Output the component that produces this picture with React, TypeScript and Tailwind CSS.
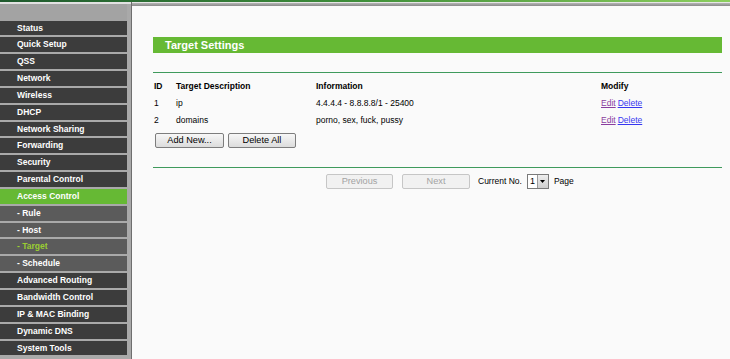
import React from "react"

type Item = { label: string; kind: "main" | "active" | "sub" | "subActive" }

const menu: Item[] = [
  { label: "Status", kind: "main" },
  { label: "Quick Setup", kind: "main" },
  { label: "QSS", kind: "main" },
  { label: "Network", kind: "main" },
  { label: "Wireless", kind: "main" },
  { label: "DHCP", kind: "main" },
  { label: "Network Sharing", kind: "main" },
  { label: "Forwarding", kind: "main" },
  { label: "Security", kind: "main" },
  { label: "Parental Control", kind: "main" },
  { label: "Access Control", kind: "active" },
  { label: "- Rule", kind: "sub" },
  { label: "- Host", kind: "sub" },
  { label: "- Target", kind: "subActive" },
  { label: "- Schedule", kind: "sub" },
  { label: "Advanced Routing", kind: "main" },
  { label: "Bandwidth Control", kind: "main" },
  { label: "IP & MAC Binding", kind: "main" },
  { label: "Dynamic DNS", kind: "main" },
  { label: "System Tools", kind: "main" },
]

const rows = [
  { id: "1", desc: "ip", info: "4.4.4.4 - 8.8.8.8/1 - 25400" },
  { id: "2", desc: "domains", info: "porno, sex, fuck, pussy" },
]

function MenuItem({ item }: { item: Item }) {
  const bg =
    item.kind === "active"
      ? "bg-[#66b934]"
      : item.kind === "main"
        ? "bg-[#3c3c3c]"
        : "bg-[#5b5b5b]"
  const color = item.kind === "subActive" ? "text-[#9acd32]" : "text-white"
  return (
    <div
      className={`${bg} ${color} h-[14.85px] mb-[2px] w-[127px] pl-[17px] text-[8.5px] font-bold leading-[15px] whitespace-nowrap`}
    >
      {item.label}
    </div>
  )
}

function Sidebar() {
  return (
    <div className="flex w-[132px] shrink-0 flex-col bg-[#a9a9a9] border-r border-[#6e6e6e]">
      <div className="h-[2px] bg-[#e2e2e2]" />
      <div className="h-[16.5px] bg-[#a3a3a3] w-[127px]" />
      {menu.map((m) => (
        <MenuItem key={m.label} item={m} />
      ))}
      <div className="flex-1 w-[127px] bg-[#a9a9a9]" />
    </div>
  )
}

function GreyButton({ children, w }: { children: React.ReactNode; w: string }) {
  return (
    <button
      className={`${w} h-[15px] rounded-[2px] border border-[#7d7d7d] bg-gradient-to-b from-[#f7f7f7] to-[#dcdcdc] text-[9.2px] leading-[13px] text-black`}
    >
      {children}
    </button>
  )
}

function DisabledButton({ children, w }: { children: React.ReactNode; w: string }) {
  return (
    <button
      className={`${w} h-[15px] rounded-[2px] border border-[#c6c6c6] bg-[#f1f1f1] text-[9.2px] leading-[13px] text-[#a3a3a3]`}
    >
      {children}
    </button>
  )
}

export default function App() {
  return (
    <div
      className="flex h-[359px] w-[730px] flex-col overflow-hidden bg-[#fafafa]"
      style={{ fontFamily: '"Liberation Sans", Arial, sans-serif' }}
    >
      <div className="h-[2px] bg-gradient-to-r from-[#1f5a2e] via-[#3f8f3a] to-[#8ccf5e]" />
      <div className="flex flex-1">
        <Sidebar />
        <div className="flex flex-1 flex-col">
          <div className="h-[1px] bg-[#e6e6e6]" />
          <div className="h-[3px] bg-gradient-to-b from-[#b5b5b5] to-[#8a8a8a]" />
          <div className="pl-[21px] pr-[8px] pt-[31px] text-[8.5px] text-black">
            <div className="h-[16px] bg-[#66b934] pl-[12px] text-[11px] font-bold leading-[16px] text-white">
              Target Settings
            </div>
            <div className="mt-[19px] h-[1px] bg-[#3f9a5c]" />
            <div className="mt-[5px]">
              <div className="flex h-[17px] items-center font-bold">
                <div className="w-[23px] pl-[1px]">ID</div>
                <div className="w-[140px]">Target Description</div>
                <div className="w-[285px]">Information</div>
                <div>Modify</div>
              </div>
              {rows.map((r) => (
                <div key={r.id} className="flex h-[17px] items-center">
                  <div className="w-[23px] pl-[1px]">{r.id}</div>
                  <div className="w-[140px]">{r.desc}</div>
                  <div className="w-[285px]">{r.info}</div>
                  <div className="flex gap-[2px]">
                    <span className="text-[#8a3d9e] underline">Edit</span>
                    <span className="text-[#3737f0] underline">Delete</span>
                  </div>
                </div>
              ))}
            </div>
            <div className="mt-[4px] flex gap-[4px] pl-[2px]">
              <GreyButton w="w-[69px]">Add New...</GreyButton>
              <GreyButton w="w-[68px]">Delete All</GreyButton>
            </div>
            <div className="mt-[19px] h-[1px] bg-[#3f9a5c]" />
            <div className="mt-[6px] flex items-center pl-[173px]">
              <DisabledButton w="w-[67px]">Previous</DisabledButton>
              <div className="ml-[9px]">
                <DisabledButton w="w-[68px]">Next</DisabledButton>
              </div>
              <span className="ml-[8px] text-[8.5px]">Current No.</span>
              <div className="ml-[5px] flex h-[15px] w-[22px] items-center border border-[#7a7a7a] bg-white">
                <span className="flex-1 pl-[2px] text-[9px] leading-[13px]">1</span>
                <div className="flex h-[13px] w-[11px] items-center justify-center border-l border-[#9a9a9a] bg-gradient-to-b from-[#eeeeee] to-[#cfcfcf]">
                  <svg width="5" height="3" viewBox="0 0 5 3">
                    <path d="M0 0 L5 0 L2.5 3 Z" fill="#000" />
                  </svg>
                </div>
              </div>
              <span className="ml-[5px] text-[8.5px]">Page</span>
            </div>
          </div>
        </div>
      </div>
    </div>
  )
}
